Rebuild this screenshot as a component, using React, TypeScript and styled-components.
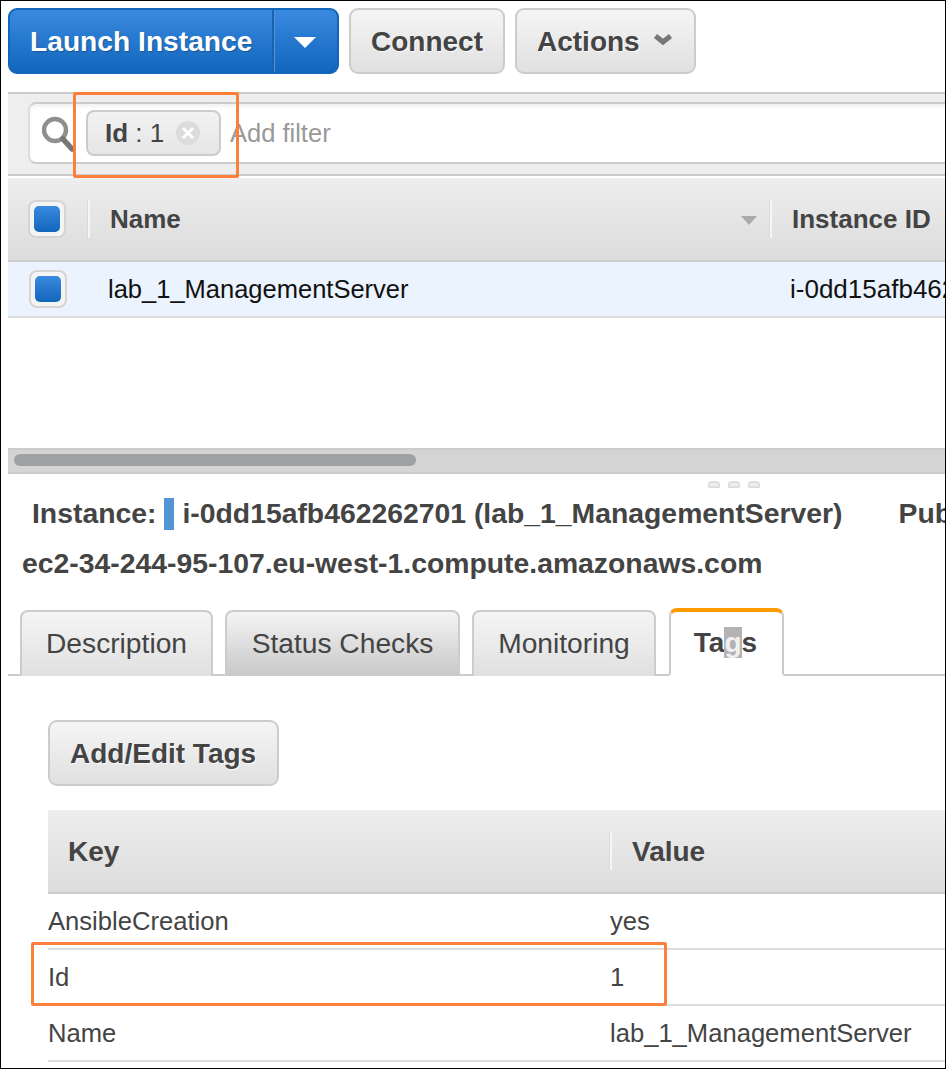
import React from "react";
import styled, { createGlobalStyle } from "styled-components";

const Global = createGlobalStyle`
  html, body { margin: 0; padding: 0; background: #fff; }
  * { box-sizing: border-box; }
`;

const Frame = styled.div`
  position: relative;
  width: 946px;
  height: 1069px;
  border: 1px solid #000;
  padding: 7px 0 0 7px;
  overflow: hidden;
  background: #fff;
  font-family: "Liberation Sans", Arial, sans-serif;
  color: #444;
`;

const Toolbar = styled.div`
  display: flex;
  gap: 10px;
  height: 66px;
`;

const Split = styled.div`
  display: flex;
  width: 331px;
  height: 66px;
  border: 2px solid #1166bb;
  border-radius: 9px;
  overflow: hidden;
  background: linear-gradient(#3a8ae0, #1166bb);
`;

const PrimaryLabel = styled.div`
  width: 264px;
  display: flex;
  align-items: center;
  padding-left: 20px;
  color: #fff;
  font-size: 28.2px;
  font-weight: 700;
  text-shadow: 1px 1px 1px rgba(0, 0, 0, 0.25);
  border-right: 2px solid #1a62ae;
  box-shadow: 1px 0 0 #4d94de;
`;

const CaretCell = styled.div`
  flex: 1;
  display: flex;
  align-items: center;
  justify-content: center;
  padding-right: 2px;
  padding-top: 3px;
`;

const Button = styled.div<{ $w: number }>`
  width: ${(p) => p.$w}px;
  height: 66px;
  border: 2px solid #ccc;
  border-radius: 9px;
  background: linear-gradient(#f5f5f5, #e0e0e0);
  display: flex;
  align-items: center;
  padding: 2px 0 0 20px;
  font-size: 28px;
  font-weight: 700;
  color: #444;
  text-shadow: 1px 1px 1px rgba(255, 255, 255, 0.9);
  gap: 13px;
`;

const Chevron = styled.svg`
  width: 20px;
  height: 13px;
  flex: none;
  margin-bottom: 6px;
`;

const FilterBar = styled.div`
  margin-top: 18px;
  height: 84px;
  border-top: 2px solid #ccc;
  border-bottom: 2px solid #ccc;
  background: #eee;
  padding: 8px 0 0 20px;
`;

const FilterInput = styled.div`
  width: 1000px;
  height: 62px;
  background: #fff;
  border: 2px solid #ccc;
  border-right: 0;
  border-left-color: #ddd;
  border-radius: 8px 0 0 8px;
  display: flex;
  align-items: center;
  padding-left: 12px;
  box-shadow: inset 0 3px 3px rgba(0, 0, 0, 0.05);
`;

const SearchGlass = styled.svg`
  width: 36px;
  height: 36px;
  flex: none;
  margin-top: 2px;
  filter: blur(0.5px);
`;

const Token = styled.div`
  margin-left: 8px;
  width: 135px;
  height: 46px;
  border: 2px solid #ccc;
  border-radius: 8px;
  background: linear-gradient(#f2f2f2, #e6e6e6);
  display: flex;
  align-items: center;
  padding-left: 17px;
  font-size: 26px;
  color: #444;
  white-space: pre;
`;

const TokenKey = styled.b`
  font-weight: 700;
`;

const TokenClose = styled.svg`
  width: 24px;
  height: 24px;
  margin-left: 12px;
  flex: none;
`;

const FilterHint = styled.span`
  margin-left: 9px;
  font-size: 25.5px;
  color: #999;
`;

const GridHead = styled.div`
  margin-top: 2px;
  height: 84px;
  width: 1200px;
  background: linear-gradient(#eeeeee, #dcdcdc);
  border-bottom: 2px solid #ccc;
  display: flex;
  align-items: center;
  padding-left: 20px;
  font-size: 26px;
  font-weight: 700;
`;

const Check = styled.div`
  width: 38px;
  height: 38px;
  flex: none;
  border: 2px solid #d4d4d4;
  border-radius: 8px;
  background: #f4f4f4;
  display: flex;
  align-items: center;
  justify-content: center;
`;

const CheckFill = styled.div`
  width: 26px;
  height: 26px;
  border-radius: 5px;
  background: linear-gradient(#3a8ae0, #1166bb);
`;

const HeadDivider = styled.div<{ $ml: number }>`
  width: 3px;
  height: 38px;
  flex: none;
  margin-left: ${(p) => p.$ml}px;
  background: #f6f6f6;
  border-left: 1px solid #dadada;
`;

const HeadName = styled.div`
  width: 659px;
  margin-left: 20px;
  flex: none;
  display: flex;
  align-items: center;
  justify-content: space-between;
  padding-right: 12px;
`;

const SortArrow = styled.svg`
  width: 16px;
  height: 9px;
  flex: none;
  margin-top: 2px;
`;

const HeadLabel = styled.div<{ $ml: number }>`
  margin-left: ${(p) => p.$ml}px;
  white-space: nowrap;
`;

const GridRow = styled.div`
  height: 56px;
  width: 1200px;
  background: #eaf3fe;
  border-bottom: 2px solid #ddd;
  display: flex;
  align-items: center;
  padding-left: 21px;
  font-size: 26px;
  color: #111;
`;

const RowName = styled.div`
  width: 682px;
  flex: none;
  margin-left: 41px;
  font-size: 25.5px;
`;

const Spacer = styled.div`
  height: 130px;
`;

const ScrollTrack = styled.div`
  height: 26px;
  background: #d4d4d4;
  border-top: 2px solid #ccc;
  border-bottom: 2px solid #ccc;
  padding: 4px 0 0 6px;
`;

const ScrollThumb = styled.div`
  width: 402px;
  height: 12px;
  border-radius: 6px;
  background: #9ea1a1;
`;

const Grip = styled.div`
  height: 14px;
  padding: 7px 0 0 700px;
  display: flex;
  gap: 8px;
`;

const GripDot = styled.div`
  width: 12px;
  height: 7px;
  border-radius: 4px 4px 1px 1px;
  background: #f0f0f0;
  border: 2px solid #dedede;
  filter: blur(0.4px);
`;

const InstanceLine = styled.div`
  margin-top: 9px;
  padding-left: 24px;
  height: 32px;
  display: flex;
  align-items: center;
  white-space: nowrap;
  font-size: 28.35px;
  font-weight: 700;
`;

const StateMark = styled.span`
  width: 10px;
  height: 32px;
  flex: none;
  margin: 1px 8px 0;
  background: #5294d4;
`;

const PublicLabel = styled.span`
  margin-left: 56px;
`;

const DnsLine = styled.div`
  margin-top: 18px;
  padding-left: 14px;
  height: 32px;
  line-height: 32px;
  font-size: 28.35px;
  font-weight: 700;
  white-space: nowrap;
`;

const Tabs = styled.div`
  margin-top: 29px;
  height: 68px;
  border-bottom: 2px solid #ccc;
  display: flex;
  align-items: flex-end;
  padding-left: 12px;
  gap: 12px;
`;

const Tab = styled.div<{ $w: number; $hover?: boolean }>`
  width: ${(p) => p.$w}px;
  height: 66px;
  margin-bottom: -2px;
  border: 2px solid #ccc;
  border-bottom: 0;
  border-radius: 8px 8px 0 0;
  background: ${(p) =>
    p.$hover ? "linear-gradient(#f4f4f4, #c8c8c8)" : "linear-gradient(#f5f5f5, #e0e0e0)"};
  display: flex;
  align-items: center;
  justify-content: center;
  padding-bottom: 2px;
  font-size: 28.2px;
  color: #444;
`;

const ActiveTab = styled.div`
  width: 115px;
  height: 68px;
  margin-left: 1px;
  margin-bottom: -2px;
  border: 2px solid #ccc;
  border-top: 4px solid #f90;
  border-bottom: 2px solid #fff;
  border-radius: 8px 8px 0 0;
  background: #fff;
  display: flex;
  align-items: center;
  justify-content: center;
  padding-right: 2px;
  font-size: 28px;
  font-weight: 700;
  color: #444;
`;

const Selected = styled.span`
  background: #b3b3b3;
  color: #f0f0f0;
`;

const Panel = styled.div`
  padding: 44px 0 0 40px;
`;

const TagTable = styled.div`
  margin-top: 24px;
  width: 898px;
  font-size: 25.6px;
`;

const TagHead = styled.div`
  height: 84px;
  background: linear-gradient(#eeeeee, #dcdcdc);
  border-bottom: 2px solid #ccc;
  display: grid;
  grid-template-columns: 561px 1fr;
  align-items: center;
  font-size: 28px;
  font-weight: 700;
`;

const KeyHead = styled.div`
  padding: 2px 0 0 20px;
`;

const ValueHead = styled.div`
  height: 38px;
  line-height: 40px;
  padding-left: 22px;
  border-left: 1px solid #dadada;
  box-shadow: inset 2px 0 0 #f6f6f6;
`;

const TagRow = styled.div`
  height: 56px;
  border-bottom: 2px solid #ddd;
  display: grid;
  grid-template-columns: 562px 1fr;
  align-items: center;
  color: #444;
`;

const Callout = styled.div<{ $x: number; $y: number; $w: number; $h: number }>`
  position: absolute;
  left: ${(p) => p.$x}px;
  top: ${(p) => p.$y}px;
  width: ${(p) => p.$w}px;
  height: ${(p) => p.$h}px;
  border: 3px solid #fc7f3c;
  border-radius: 2px;
  pointer-events: none;
`;

const tags = [
  ["AnsibleCreation", "yes"],
  ["Id", "1"],
  ["Name", "lab_1_ManagementServer"],
];

export default function App() {
  return (
    <Frame>
      <Global />
      <Toolbar>
        <Split>
          <PrimaryLabel>Launch Instance</PrimaryLabel>
          <CaretCell>
            <svg width="22" height="11" viewBox="0 0 22 11">
              <path d="M0 0H22L11 11Z" fill="#fff" />
            </svg>
          </CaretCell>
        </Split>
        <Button $w={156}>Connect</Button>
        <Button $w={181}>
          Actions
          <Chevron viewBox="0 0 20 13">
            <path d="M2.5 3L10 9L17.5 3" fill="none" stroke="#777" strokeWidth="5" />
          </Chevron>
        </Button>
      </Toolbar>
      <FilterBar>
        <FilterInput>
          <SearchGlass viewBox="0 0 36 36">
            <circle cx="13" cy="14" r="11" fill="#fff" stroke="#8f8f8f" strokeWidth="4.5" />
            <path d="M21 23L30 33" stroke="#777" strokeWidth="5.5" strokeLinecap="round" />
          </SearchGlass>
          <Token>
            <TokenKey>Id</TokenKey>
            {" : 1"}
            <TokenClose viewBox="0 0 24 24">
              <circle cx="12" cy="12" r="12" fill="#dcdcdc" />
              <path d="M7 7L17 17M17 7L7 17" stroke="#fff" strokeWidth="3" />
            </TokenClose>
          </Token>
          <FilterHint>Add filter</FilterHint>
        </FilterInput>
      </FilterBar>
      <GridHead>
        <Check>
          <CheckFill />
        </Check>
        <HeadDivider $ml={21} />
        <HeadName>
          Name
          <SortArrow viewBox="0 0 16 9">
            <path d="M0 0H16L8 9Z" fill="#aaa" />
          </SortArrow>
        </HeadName>
        <HeadDivider $ml={0} />
        <HeadLabel $ml={20}>Instance ID</HeadLabel>
      </GridHead>
      <GridRow>
        <Check>
          <CheckFill />
        </Check>
        <RowName>lab_1_ManagementServer</RowName>
        <span>i-0dd15afb462262701</span>
      </GridRow>
      <Spacer />
      <ScrollTrack>
        <ScrollThumb />
      </ScrollTrack>
      <Grip>
        <GripDot />
        <GripDot />
        <GripDot />
      </Grip>
      <InstanceLine>
        Instance:
        <StateMark />
        i-0dd15afb462262701 (lab_1_ManagementServer)
        <PublicLabel>Public DNS:</PublicLabel>
      </InstanceLine>
      <DnsLine>ec2-34-244-95-107.eu-west-1.compute.amazonaws.com</DnsLine>
      <Tabs>
        <Tab $w={193}>Description</Tab>
        <Tab $w={235} $hover>
          Status Checks
        </Tab>
        <Tab $w={184}>Monitoring</Tab>
        <ActiveTab>
          <span>
            Ta<Selected>g</Selected>s
          </span>
        </ActiveTab>
      </Tabs>
      <Panel>
        <Button $w={231}>Add/Edit Tags</Button>
        <TagTable>
          <TagHead>
            <KeyHead>Key</KeyHead>
            <ValueHead>Value</ValueHead>
          </TagHead>
          {tags.map(([k, v]) => (
            <TagRow key={k}>
              <span>{k}</span>
              <span>{v}</span>
            </TagRow>
          ))}
        </TagTable>
      </Panel>
      <Callout $x={72} $y={91} $w={166} $h={86} />
      <Callout $x={30} $y={941} $w={636} $h={64} />
    </Frame>
  );
}
